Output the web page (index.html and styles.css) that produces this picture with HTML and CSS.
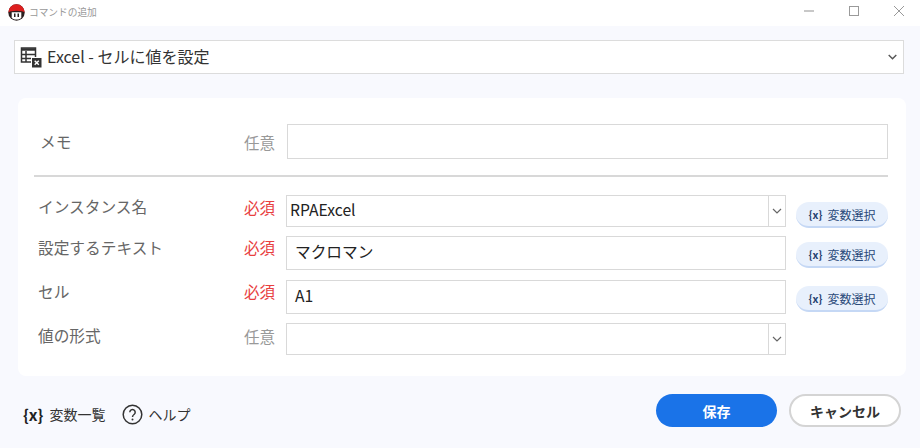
FILE: index.html
```html
<!DOCTYPE html>
<html lang="ja">
<head>
<meta charset="utf-8">
<title>コマンドの追加</title>
<link rel="stylesheet" href="styles.css">
</head>
<body>
<div class="window">
  <header class="titlebar">
    <svg class="app-icon" width="17" height="17" viewBox="0 0 17 17">
      <circle cx="8.500" cy="8.500" r="8.200" fill="#2b2020"/>
      <path d="M0.300 8.500a8.200 8.200 0 0 1 16.400 0q-2 -1.500 -3.500 -1.300q-4.700 -.7 -9.400 0q-1.500 -.2 -3.500 1.300z" fill="#dd1f1f"/>
      <path d="M3.700 8.200h9.600v5.300q-1 2 -4.800 2t-4.800 -2z" fill="#fff"/>
      <path d="M6 9.500h1.500v3.500h-1.500zM9.500 9.500h1.500v3.500h-1.500z" fill="#2b2020"/>
    </svg>
    <span class="title">コマンドの追加</span>
    <div class="win-controls">
      <svg width="12" height="12" viewBox="0 0 12 12"><path d="M1 6h10" stroke="#aaa" stroke-width="1.300"/></svg>
      <svg width="12" height="12" viewBox="0 0 12 12"><rect x="1.500" y="1.500" width="9" height="9" fill="none" stroke="#9a9a9a" stroke-width="1"/></svg>
      <svg width="12" height="12" viewBox="0 0 12 12"><path d="M1 1l10 10M11 1L1 11" stroke="#999" stroke-width="1"/></svg>
    </div>
  </header>

  <main class="content">
    <div class="command-select">
      <svg class="excel-icon" width="22" height="22" viewBox="0 0 22 22">
        <path d="M1.500 2h14v14h-14z" fill="none" stroke="#333" stroke-width="1.500"/>
        <path d="M1.500 3.500h14" stroke="#333" stroke-width="2.500"/>
        <path d="M6 5v11M2 8.500h13M2 12.500h9" stroke="#333" stroke-width="1.500"/>
        <rect x="11" y="11" width="11" height="11" fill="#fff"/>
        <rect x="12" y="12" width="9.500" height="9.500" fill="#333"/>
        <path d="M14.700 14.700l4.100 4.100M18.800 14.700l-4.100 4.100" stroke="#fff" stroke-width="1.400"/>
      </svg>
      <span class="command-name">Excel - セルに値を設定</span>
      <svg class="chevron" width="9" height="6" viewBox="0 0 9 6"><path d="M.7 1l3.800 3.800 3.800-3.800" fill="none" stroke="#555" stroke-width="1.400"/></svg>
    </div>

    <section class="panel">
      <div class="row row-memo">
        <label class="label label-memo">メモ</label>
        <span class="tag optional">任意</span>
        <div class="field field-memo"></div>
      </div>
      <hr class="divider">
      <div class="row row-instance">
        <label class="label">インスタンス名</label>
        <span class="tag required">必須</span>
        <div class="field field-select">
          <span class="value value-tight">RPAExcel</span>
          <span class="drop"><svg width="10" height="6" viewBox="0 0 10 6"><path d="M1 1l4 4 4-4" fill="none" stroke="#666" stroke-width="1.200"/></svg></span>
        </div>
        <button class="var-btn"><b class="var-x">{x}</b>変数選択</button>
      </div>
      <div class="row row-text">
        <label class="label">設定するテキスト</label>
        <span class="tag required">必須</span>
        <div class="field"><span class="value">マクロマン</span></div>
        <button class="var-btn"><b class="var-x">{x}</b>変数選択</button>
      </div>
      <div class="row row-cell">
        <label class="label">セル</label>
        <span class="tag required">必須</span>
        <div class="field"><span class="value">A1</span></div>
        <button class="var-btn"><b class="var-x">{x}</b>変数選択</button>
      </div>
      <div class="row row-format">
        <label class="label">値の形式</label>
        <span class="tag optional">任意</span>
        <div class="field field-select">
          <span class="value"></span>
          <span class="drop"><svg width="10" height="6" viewBox="0 0 10 6"><path d="M1 1l4 4 4-4" fill="none" stroke="#666" stroke-width="1.200"/></svg></span>
        </div>
      </div>
    </section>

    <footer class="footer">
      <a class="foot-link link-vars"><b class="foot-x">{x}</b>変数一覧</a>
      <a class="foot-link link-help">
        <svg width="21" height="21" viewBox="0 0 21 21"><circle cx="10.500" cy="10.500" r="9.300" fill="none" stroke="#333" stroke-width="1.500"/><path d="M7.800 8.200a2.700 2.700 0 1 1 4.200 2.300c-1 .7-1.500 1.200-1.500 2.400" fill="none" stroke="#333" stroke-width="1.500"/><circle cx="10.500" cy="15.500" r="1" fill="#333"/></svg>
        ヘルプ
      </a>
      <div class="actions">
        <button class="btn btn-save">保存</button>
        <button class="btn btn-cancel">キャンセル</button>
      </div>
    </footer>
  </main>
</div>
</body>
</html>
```
FILE: styles.css
```css
* { box-sizing: border-box; }
html, body { margin: 0; padding: 0; }
body {
  width: 920px;
  height: 448px;
  overflow: hidden;
  font-family: "Noto Sans CJK JP", "Noto Sans", sans-serif;
  color: #333;
  background: #f8f9fe;
}
.window { display: flex; flex-direction: column; height: 448px; }

.titlebar {
  height: 26px;
  flex: none;
  background: #fff;
  display: flex;
  align-items: center;
  padding-left: 8px;
}
.app-icon { margin-right: 4px; margin-top: -2px; }
.title { font-size: 9.700px; color: #999; margin-top: -2px; }
.win-controls { margin-left: auto; display: flex; gap: 33px; padding-right: 15px; margin-top: -4px; }

.content { flex: 1; padding: 14px 16px 0 14px; display: flex; flex-direction: column; }

.command-select {
  height: 34px;
  width: 890px;
  background: #fff;
  border: 1px solid #dcdcdc;
  display: flex;
  align-items: center;
  padding-left: 5px;
  flex: none;
}
.excel-icon { margin-right: 5px; }
.command-name { font-size: 16px; color: #333; margin-top: -2px; }
.chevron { margin-left: auto; margin-right: 6px; }

.panel {
  margin: 24px 0 0 4px;
  width: 888px;
  height: 278px;
  background: #fff;
  border-radius: 8px;
  padding: 26px 0 0 16px;
  flex: none;
}
.row { display: flex; align-items: flex-start; }
.label { width: 210px; padding-left: 4px; font-size: 15.700px; color: #666; flex: none; line-height: 22px; }
.label-memo { padding-left: 6px; }
.tag { width: 42px; font-size: 15.500px; flex: none; line-height: 22px; }
.optional { color: #999; }
.required { color: #e8403f; }

.field {
  width: 500px;
  height: 34px;
  border: 1px solid #d9d9d9;
  background: #fff;
  display: flex;
  align-items: center;
  flex: none;
  padding-left: 8px;
}
.value { font-size: 15.700px; color: #222; flex: 1; margin-top: -3px; }
.value-tight { margin-left: -5px; }

.row-memo { height: 35px; }
.row-memo .label, .row-memo .tag { margin-top: 7px; }
.field-memo { width: 601px; height: 35px; margin-left: 1px; }

.divider { border: 0; height: 2px; background: #d8d8d8; margin: 16px 0 18px; width: 854px; }

.row-instance { height: 41px; }
.row-instance .field { height: 32px; }
.row-instance .label, .row-instance .tag { margin-top: 1px; }
.row-text { height: 44px; }
.row-text .label { margin-top: 1px; }
.row-cell { height: 43px; }
.row-cell .label { margin-top: 1px; }
.row-format .field { height: 32px; }
.row-format .label, .row-format .tag { margin-top: 2px; }

.drop {
  width: 17px;
  align-self: stretch;
  border-left: 1px solid #d9d9d9;
  display: flex;
  align-items: center;
  justify-content: center;
  flex: none;
  margin-left: auto;
}

.var-btn {
  width: 92px;
  height: 26px;
  margin: 7px 0 0 10px;
  border: 0;
  border-bottom: 2px solid #c5d8f5;
  border-radius: 13px;
  background: #e8f0fc;
  color: #2a4a7a;
  font-family: inherit;
  font-size: 12px;
  padding: 0;
  display: flex;
  align-items: center;
  justify-content: center;
  flex: none;
}
.row-text .var-btn, .row-cell .var-btn { margin-top: 6px; }
.var-x { margin-right: 5px; font-size: 10.500px; color: #1f3f70; }

.footer { display: flex; align-items: center; height: 40px; margin-top: 18px; padding-left: 9px; flex: none; }
.foot-link { display: flex; align-items: center; font-size: 14px; color: #333; }
.foot-x { font-size: 15.500px; margin-right: 6px; color: #222; }
.link-vars { margin-right: 17px; }
.link-help svg { margin-right: 5px; }
.actions { margin-left: auto; display: flex; gap: 12px; margin-right: 3px; margin-top: -7px; }
.btn {
  height: 33px;
  border-radius: 17px;
  font-family: inherit;
  font-size: 14px;
  font-weight: 700;
  padding: 0;
}
.btn-save { width: 121px; background: #1a73e8; color: #fff; border: 0; }
.btn-cancel { width: 112px; background: #fff; color: #333; border: 2px solid #d4d4d4; }
```
